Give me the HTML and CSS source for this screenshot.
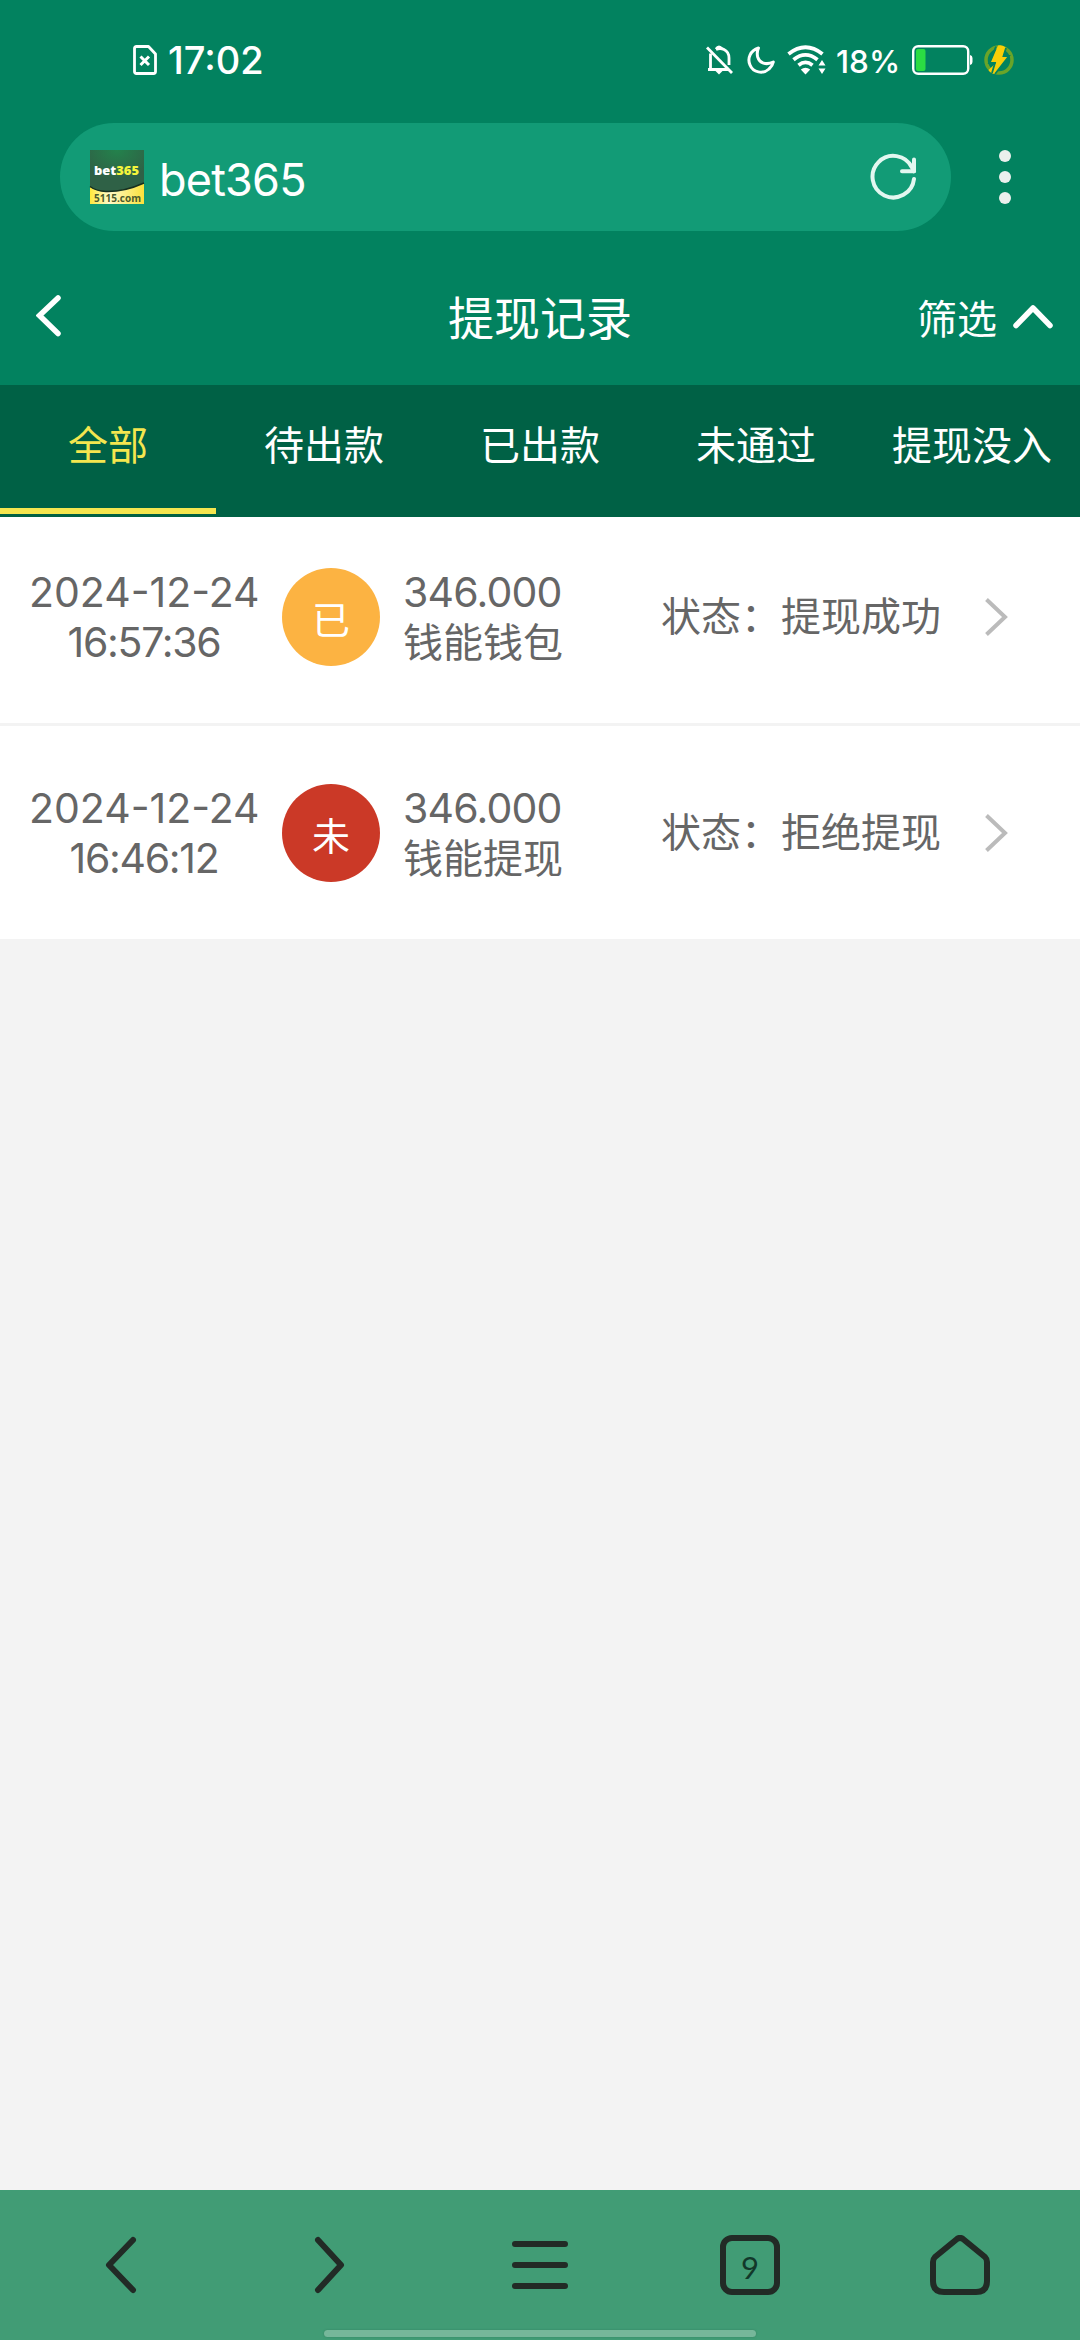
FILE: index.html
```html
<!DOCTYPE html>
<html lang="zh-CN">
<head>
  <meta charset="UTF-8">
  <title>提现记录</title>
  <link rel="stylesheet" href="styles.css">
</head>
<body>
  <div class="status-bar">
    <svg class="sim" width="24" height="30" viewBox="0 0 24 30" fill="none" stroke="#fff">
      <path d="M3.5 1.5H15.5L22.5 9V26.5Q22.5 28.5 20.5 28.5H3.5Q1.5 28.5 1.5 26.5V3.5Q1.5 1.5 3.5 1.5Z" stroke-width="2.8" stroke-linejoin="round"/>
      <path d="M7.5 11.5L16 20M16 11.5L7.5 20" stroke-width="3"/>
    </svg>
    <span class="time">17:02</span>
    <div class="status-icons">
      <svg class="bell" width="28" height="30" viewBox="0 0 28 30" fill="none" stroke="#fff" stroke-width="2.8">
        <path d="M1 2.5L26 28"/>
        <path d="M4.500 8.500V24.500H21.500M2 24.500H23M10 4.500Q14 2.500 18 4.500Q23 7 23 13V20"/>
        <path d="M9.500 26H16.500L13 29.500Z" fill="#fff" stroke="none"/>
        <path d="M10 4Q13 0 16 4" fill="#fff"/>
      </svg>
      <svg class="moon" width="28" height="30" viewBox="0 0 28 30" fill="none" stroke="#fff" stroke-width="3" stroke-linejoin="round">
        <path d="M11.500 3C3.500 5.500 0 13 3 20C6 27.500 16 29.500 22 24Q25.500 21 26.300 17C19 20.500 12.500 18 10.700 12Q9.500 7.500 11.500 3Z"/>
      </svg>
      <svg class="wifi" width="40" height="30" viewBox="0 0 40 30" fill="none" stroke="#fff" stroke-width="3.800">
        <path d="M1.500 9Q18.500 -4.500 35.500 9"/>
        <path d="M6.500 14.700Q18.500 5 30.500 14.700"/>
        <path d="M11.500 20.200Q18.500 14.500 25.500 20.200"/>
        <path d="M13.800 24.500Q18.500 21 23.200 24.500L18.500 29.500Z" fill="#fff" stroke="none"/>
        <path d="M35 15L38.500 20.500H31.500ZM35 29L31.500 23.500H38.500Z" fill="#fff" stroke="none"/>
      </svg>
      <span class="percent">18%</span>
      <svg class="battery" width="61" height="30" viewBox="0 0 61 30">
        <rect x="1.200" y="1.200" width="55" height="27.600" rx="5" fill="none" stroke="#fff" stroke-width="2.400"/>
        <rect x="4" y="4" width="9.500" height="22" rx="2" fill="#2bdc43"/>
        <path d="M58 10Q60.500 10.500 60.500 13V17Q60.500 19.500 58 20Z" fill="#fff"/>
      </svg>
      <svg class="bolt" width="30" height="30" viewBox="0 0 30 30">
        <circle cx="15" cy="15" r="13" fill="none" stroke="#84ad1c" stroke-width="3.500" stroke-opacity="0.800"/>
        <path d="M14 0.500Q19 -0.500 22 3L19 11L24 12.500L11 29Q6 28 4.500 25L12 18L7 17Z" fill="#f8ce08"/>
        <path d="M12 1.500L5 18H11L8 28" fill="none" stroke="#02825f" stroke-width="1.800"/>
        <path d="M22 3L19.500 11H25L11 29" fill="none" stroke="#02825f" stroke-width="1.800"/>
      </svg>
    </div>
  </div>

  <div class="browser-bar">
    <div class="address">
      <svg class="favicon" width="54" height="54" viewBox="0 0 54 54">
        <defs>
          <radialGradient id="fav-green" cx="50%" cy="0%" r="70%">
            <stop offset="0" stop-color="#23824c"/>
            <stop offset="1" stop-color="#2f6146"/>
          </radialGradient>
          <linearGradient id="fav-yellow">
            <stop offset="0" stop-color="#ffe83c"/>
            <stop offset="0.350" stop-color="#fff9c8"/>
            <stop offset="1" stop-color="#fbe13a"/>
          </linearGradient>
        </defs>
        <rect width="54" height="54" fill="url(#fav-yellow)"/>
        <path d="M0 0H54V33Q34 42 16 41.500Q6 41 0 37Z" fill="url(#fav-green)"/>
        <path d="M0 36.500Q6 41 16 41.500Q34 42 54 33" fill="none" stroke="#17301f" stroke-width="1.500"/>
        <text class="fav-name" x="4" y="24.500" textLength="45" lengthAdjust="spacingAndGlyphs" fill="#fff">bet<tspan fill="#f4f53c">365</tspan></text>
        <text class="fav-site" x="4" y="51.500" textLength="47" lengthAdjust="spacingAndGlyphs" fill="#4b5a2c">5115.com</text>
      </svg>
      <span class="site-name">bet365</span>
      <svg class="reload" width="48" height="48" viewBox="0 0 48 48" fill="none" stroke="#e3f7f0" stroke-width="4" stroke-linecap="round" stroke-linejoin="round">
        <path d="M44 26A20.800 20.800 0 1 1 42 14.500L44 18.300"/>
        <path d="M44 6.500V18.300H32"/>
      </svg>
    </div>
    <svg class="more" width="12" height="54" viewBox="0 0 12 54" fill="#ebefed">
      <circle cx="6" cy="6" r="6"/>
      <circle cx="6" cy="27" r="6"/>
      <circle cx="6" cy="48" r="6"/>
    </svg>
  </div>

  <header class="page-header">
    <svg class="back" width="25" height="42" viewBox="0 0 25 42" fill="none" stroke="#fff" stroke-width="5.500" stroke-linecap="round">
      <path d="M22 3L3.500 20.500L22 38.500"/>
    </svg>
    <h1>提现记录</h1>
    <div class="filter">
      <span>筛选</span>
      <svg width="40" height="24" viewBox="0 0 40 24" fill="none" stroke="#fff" stroke-width="5.500" stroke-linecap="round" stroke-linejoin="round">
        <path d="M3 20.500L20 3L37 20.500"/>
      </svg>
    </div>
  </header>

  <nav class="tabs">
    <a class="tab active">全部</a>
    <a class="tab">待出款</a>
    <a class="tab">已出款</a>
    <a class="tab">未通过</a>
    <a class="tab">提现没入</a>
  </nav>

  <main class="records">
    <div class="record">
      <div class="date">2024-12-24<div class="clock">16:57:36</div></div>
      <div class="badge done">已</div>
      <div class="amount"><div class="number">346.000</div><div class="wallet">钱能钱包</div></div>
      <div class="state">状态：提现成功</div>
      <svg class="arrow" width="24" height="38" viewBox="0 0 24 38" fill="none" stroke="#bbb" stroke-width="4">
        <path d="M1.500 1.500L20 19L1.500 36.500"/>
      </svg>
    </div>
    <div class="record">
      <div class="date">2024-12-24<div class="clock">16:46:12</div></div>
      <div class="badge failed">未</div>
      <div class="amount"><div class="number">346.000</div><div class="wallet">钱能提现</div></div>
      <div class="state">状态：拒绝提现</div>
      <svg class="arrow" width="24" height="38" viewBox="0 0 24 38" fill="none" stroke="#bbb" stroke-width="4">
        <path d="M1.500 1.500L20 19L1.500 36.500"/>
      </svg>
    </div>
  </main>

  <footer class="toolbar">
    <div class="tools">
      <svg width="60" height="60" viewBox="0 0 60 60">
        <path d="M43 5L19 30L43 55"/>
      </svg>
      <svg width="60" height="60" viewBox="0 0 60 60">
        <path d="M18 5L41 30L18 55"/>
      </svg>
      <svg width="60" height="60" viewBox="0 0 60 60">
        <path d="M5 9H55M5 30H55M5 51H55"/>
      </svg>
      <svg width="60" height="60" viewBox="0 0 60 60">
        <rect x="3" y="3" width="54" height="54" rx="9"/>
        <text class="tab-count" x="30" y="44" text-anchor="middle">9</text>
      </svg>
      <svg width="60" height="60" viewBox="0 0 60 60">
        <path d="M27 4Q30 1.800 33 4L55 22Q57 24 57 27V46Q57 57 46 57H14Q3 57 3 46V27Q3 24 5 22Z"/>
      </svg>
    </div>
    <div class="handle"></div>
  </footer>
</body>
</html>
```

FILE: styles.css
```css
body {
  display: flex;
  flex-direction: column;
  height: 2340px;
  margin: 0;
  background-color: #f3f3f3;
  color: #666;
  font-family: "Noto Sans CJK SC", sans-serif;
  font-size: 40px;
}

svg {
  display: block;
  flex: none;
}

.status-bar {
  display: flex;
  align-items: center;
  box-sizing: border-box;
  height: 123px;
  padding: 0 66px 3px 133px;
  background-color: #02825f;
  color: #fff;
  font-family: Inter, sans-serif;
  font-weight: 500;
}

.time {
  margin-left: 11px;
  font-size: 38px;
}

.status-icons {
  display: flex;
  align-items: center;
  margin-left: auto;
}

.moon {
  margin-left: 13px;
}

.wifi {
  margin-left: 12px;
}

.percent {
  width: 64px;
  margin: 2px 12px 0 9px;
  font-size: 31.5px;
  white-space: nowrap;
}

.bolt {
  margin-left: 11px;
}

.browser-bar {
  display: flex;
  align-items: center;
  height: 108px;
  padding: 0 60px;
  background-color: #02825f;
}

.address {
  display: flex;
  align-items: center;
  box-sizing: border-box;
  width: 891px;
  height: 108px;
  padding: 0 33px 0 30px;
  border-radius: 54px;
  background-color: #129b76;
}

.favicon {
  overflow: visible;
}

.fav-name {
  font: 800 12.5px "Open Sans", sans-serif;
}

.fav-site {
  font: 700 11px "Open Sans", sans-serif;
}

.site-name {
  margin: 5px 0 0 15px;
  color: #fff;
  font-family: Inter, sans-serif;
  font-size: 45px;
  letter-spacing: -0.8px;
}

.reload {
  margin-left: auto;
}

.more {
  margin-left: 48px;
}

.page-header {
  display: grid;
  grid-template-columns: 1fr auto 1fr;
  align-items: start;
  box-sizing: border-box;
  height: 154px;
  padding: 19px 27px 0 36px;
  background-color: #02825f;
  color: #fff;
}

.back {
  margin-top: 45px;
}

h1 {
  margin: 31px 9px 0 0;
  font-size: 46px;
  font-weight: 400;
  line-height: 68px;
}

.filter {
  display: flex;
  align-items: center;
  justify-content: flex-end;
  gap: 16px;
  height: 60px;
  margin-top: 37px;
}

.tabs {
  display: flex;
  height: 132px;
  background-color: #006145;
}

.tab {
  box-sizing: border-box;
  width: 216px;
  height: 129px;
  color: #fff;
  line-height: 117px;
  text-align: center;
  white-space: nowrap;
}

.tab.active {
  border-bottom: 6px solid #f4e64f;
  color: #f4e64f;
}

.record {
  display: flex;
  align-items: flex-start;
  box-sizing: border-box;
  height: 213px;
  padding: 58px 0 0 29px;
  background-color: #fff;
  line-height: 50px;
}

.record:first-child {
  height: 209px;
  padding-top: 51px;
  border-bottom: 3px solid #f3f3f3;
}

.date,
.number {
  margin-top: -1px;
  font-family: Inter, sans-serif;
  font-size: 41px;
}

.number {
  letter-spacing: -0.8px;
}

.date {
  width: 230px;
  text-align: center;
  white-space: nowrap;
}

.clock {
  letter-spacing: -1.3px;
}

.badge {
  width: 98px;
  height: 98px;
  margin-left: 23px;
  border-radius: 50%;
  color: #fff;
  font-size: 38px;
  line-height: 99px;
  text-align: center;
}

.badge.done {
  background-color: #fcb342;
}

.badge.failed {
  background-color: #cb3927;
}

.amount {
  width: 258px;
  margin-left: 23px;
}

.wallet {
  line-height: 46px;
}

.state {
  width: 280px;
  line-height: 93px;
  white-space: nowrap;
}

.arrow {
  margin: 30px 0 0 44px;
}

.toolbar {
  display: flex;
  flex-direction: column;
  justify-content: space-between;
  box-sizing: border-box;
  height: 150px;
  margin-top: auto;
  padding: 45px 15px 3px;
  background-color: #419c75;
}

.tools {
  display: grid;
  grid-template-columns: repeat(5, 1fr);
  justify-items: center;
  fill: none;
  stroke: #222b26;
  stroke-width: 6;
  stroke-linecap: round;
  stroke-linejoin: round;
}

.tab-count {
  fill: #12382a;
  stroke: none;
  font: 400 31px Lato, sans-serif;
}

.handle {
  width: 432px;
  height: 7px;
  margin: 0 auto;
  border-radius: 4px;
  background-color: #76b79a;
  box-shadow: 0 0 2px #347f5f;
}
```
